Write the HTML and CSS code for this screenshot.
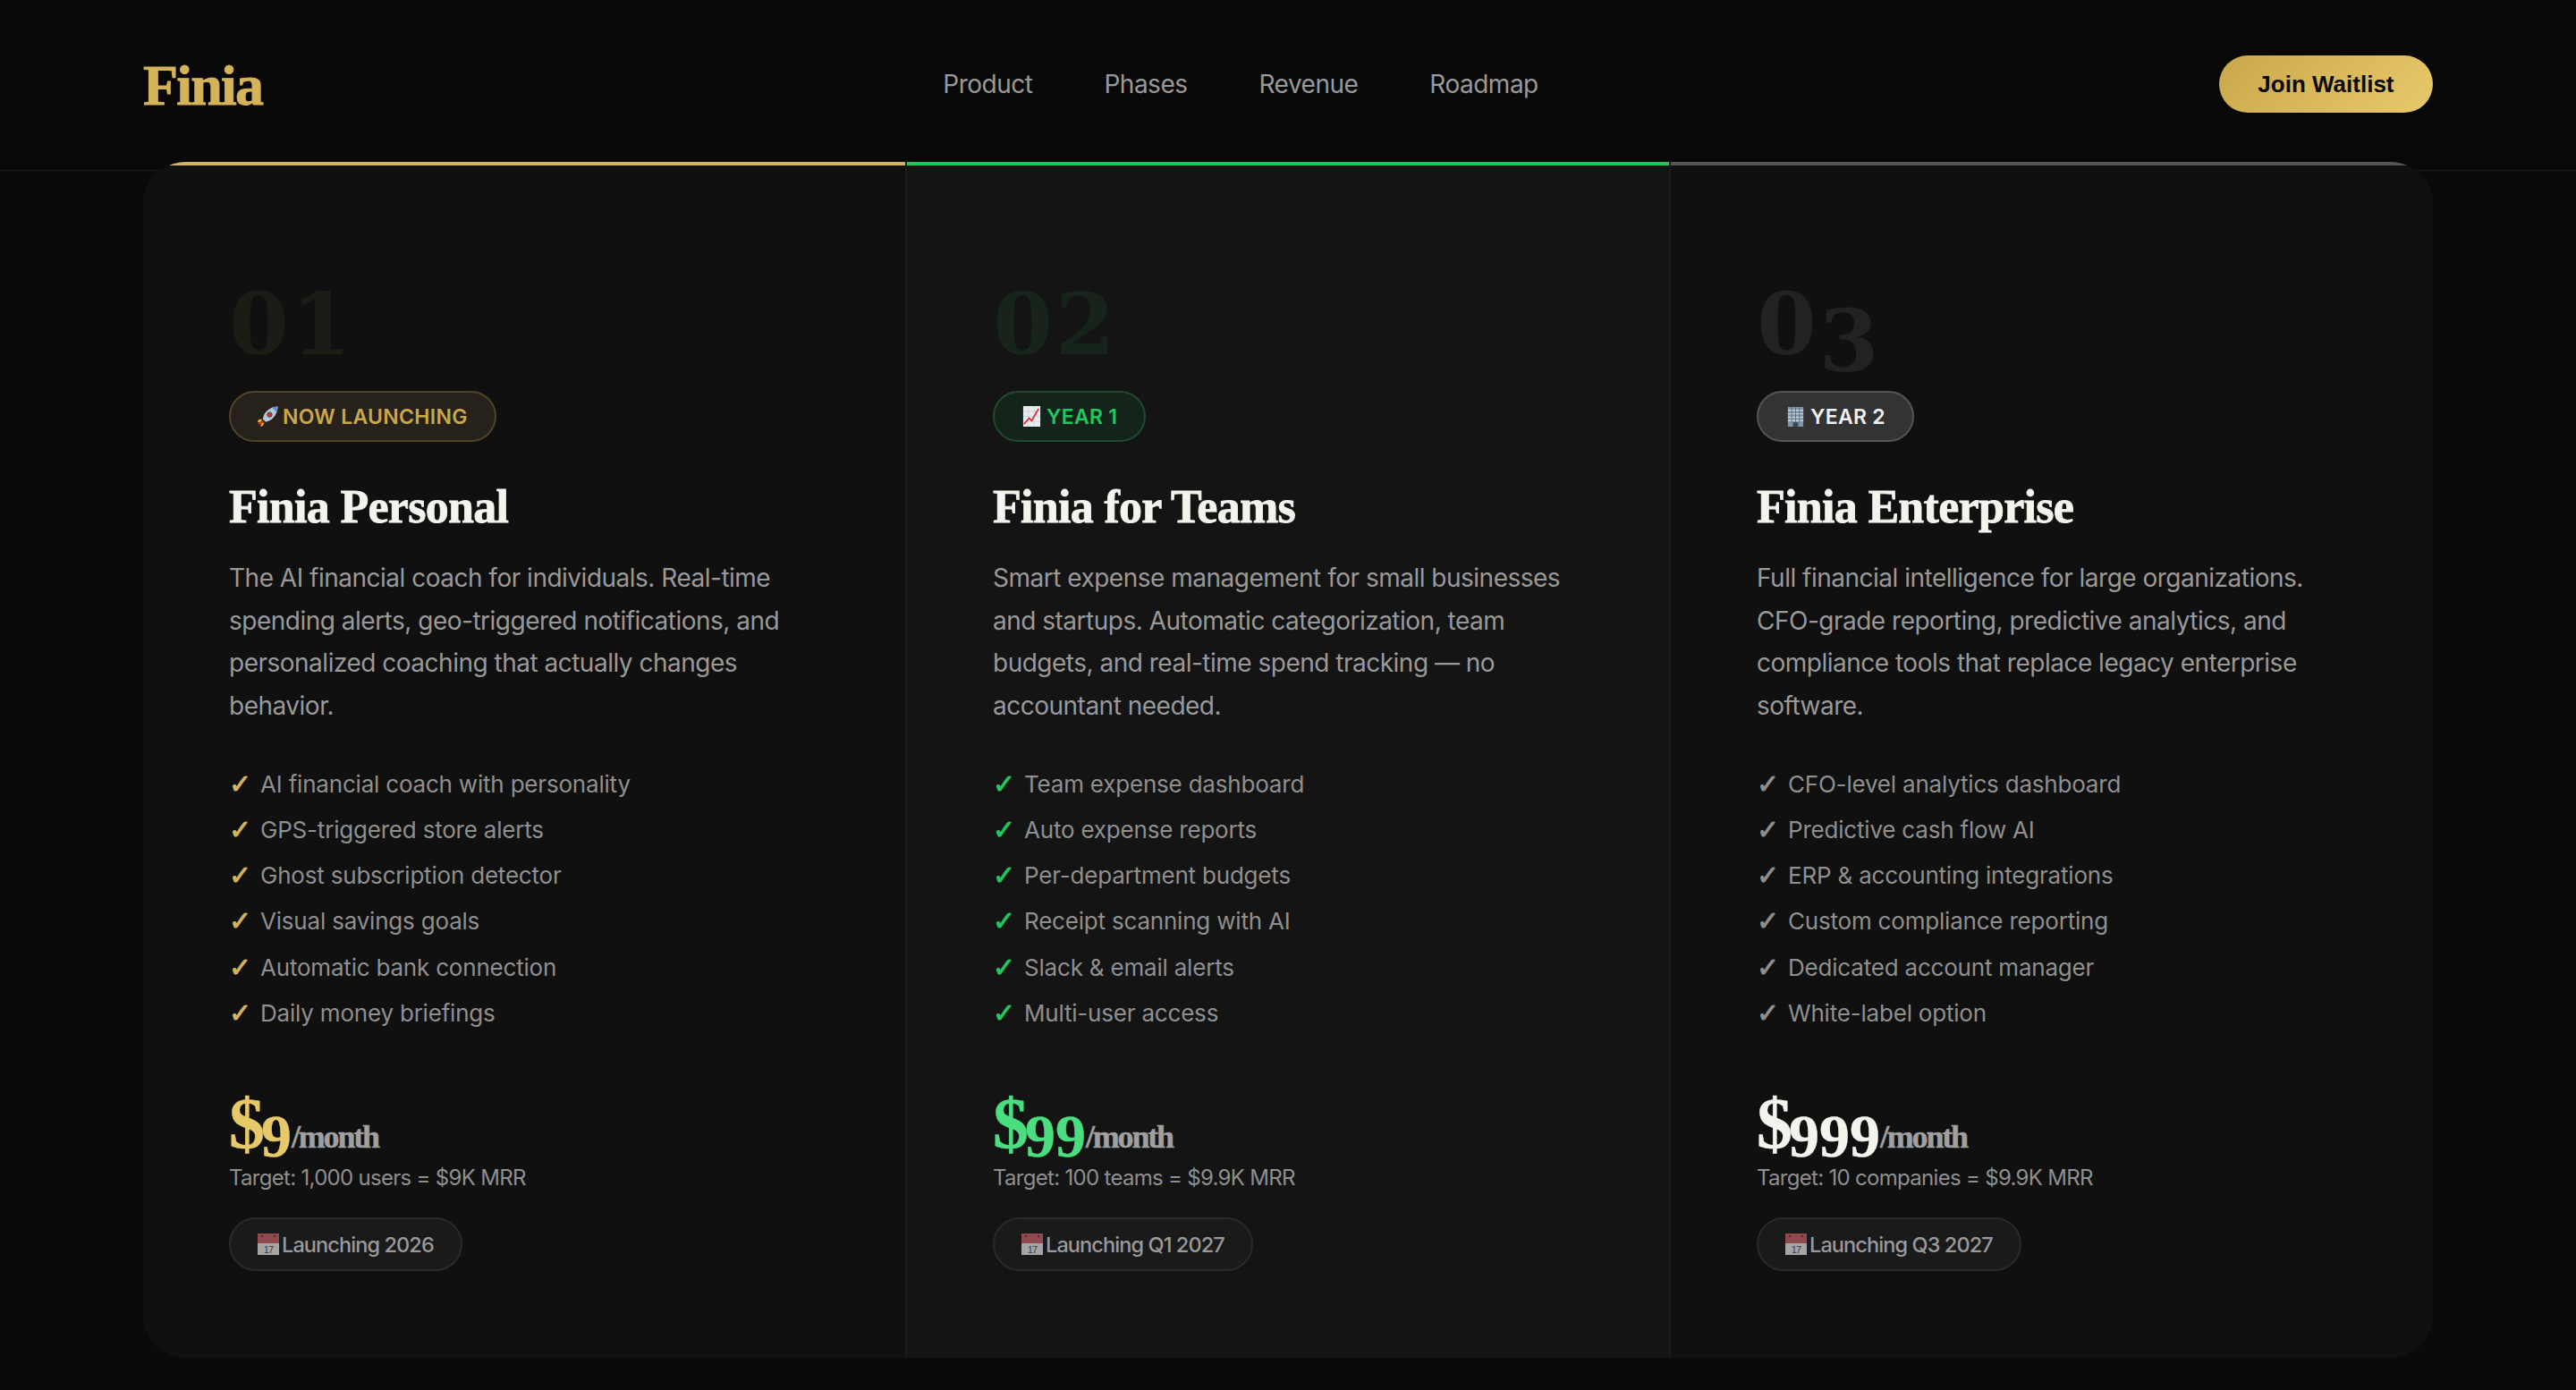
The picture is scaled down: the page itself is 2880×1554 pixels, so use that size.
FILE: index.html
```html
<!DOCTYPE html>
<html lang="en">
<head>
    <meta charset="UTF-8">
    <meta name="viewport" content="width=device-width, initial-scale=1.0">
    <title>Finia</title>
    <link rel="stylesheet" href="styles.css">
</head>
<body>
    <nav class="topnav">
        <div class="logo">Finia</div>
        <div class="nav-links">
            <a href="#product">Product</a>
            <a href="#phases">Phases</a>
            <a href="#revenue">Revenue</a>
            <a href="#roadmap">Roadmap</a>
        </div>
        <button class="waitlist-btn">Join Waitlist</button>
    </nav>

    <main class="phase-grid">
        <!-- Personal -->
        <section class="phase phase-gold">
            <div class="phase-num">01</div>
            <span class="phase-tag">
                <svg class="tag-icon" viewBox="0 0 24 24">
                    <path d="M7 17 L2 18 L1 22 L6 20 Z" fill="#e8352b"/>
                    <path d="M8 19 L6 23 L3 24 L5 20 Z" fill="#f7c325"/>
                    <path d="M5 15 L1 16 L0 19 L4 18 Z" fill="#f7c325"/>
                    <path d="M23.5 0.5 C17 0.5 11 4 7.5 10 L6 15 L9.5 18.5 L14 17 C20 13.5 23.5 7 23.5 0.5 Z" fill="#b9c6d4"/>
                    <path d="M23.5 0.5 C21 0.6 19 1 17 2 L22 7 C23 5 23.5 3 23.5 0.5 Z" fill="#5b93d6"/>
                    <circle cx="14" cy="10" r="2.8" fill="#c8342c" stroke="#33445a" stroke-width="1"/>
                </svg>
                NOW LAUNCHING
            </span>
            <h2 class="phase-title">Finia Personal</h2>
            <p class="phase-desc">The AI financial coach for individuals. Real-time spending alerts, geo-triggered notifications, and personalized coaching that actually changes behavior.</p>
            <ul class="feature-list">
                <li><span class="tick">✓</span>AI financial coach with personality</li>
                <li><span class="tick">✓</span>GPS-triggered store alerts</li>
                <li><span class="tick">✓</span>Ghost subscription detector</li>
                <li><span class="tick">✓</span>Visual savings goals</li>
                <li><span class="tick">✓</span>Automatic bank connection</li>
                <li><span class="tick">✓</span>Daily money briefings</li>
            </ul>
            <div class="price"><span class="cur">$</span><span class="amt">9</span><span class="per">/month</span></div>
            <div class="target">Target: 1,000 users = $9K MRR</div>
            <span class="launch">
                <svg class="launch-icon" viewBox="0 0 24 24">
                    <rect width="24" height="24" fill="#a5a5a5"/>
                    <rect width="24" height="11" fill="#8e4a4c"/>
                    <circle cx="5" cy="3" r="1" fill="#3a2a2a"/>
                    <circle cx="19" cy="3" r="1" fill="#3a2a2a"/>
                    <text x="12" y="21.5" font-size="11" text-anchor="middle" fill="#3b3b3b" font-family="Liberation Sans">17</text>
                </svg>
                Launching 2026
            </span>
        </section>

        <!-- Teams -->
        <section class="phase phase-green">
            <div class="phase-num">02</div>
            <span class="phase-tag">
                <svg class="tag-icon" viewBox="0 0 24 24">
                    <rect x="2" y="0" width="20" height="24" fill="#e9edf0"/>
                    <path d="M2 6 H22 M2 12 H22 M2 18 H22 M8 0 V24 M15 0 V24" stroke="#c6ccd2" stroke-width="0.7"/>
                    <path d="M3 21 L9 14 L12 17 L20 3" stroke="#d0342c" stroke-width="1.8" fill="none"/>
                </svg>
                YEAR 1
            </span>
            <h2 class="phase-title">Finia for Teams</h2>
            <p class="phase-desc">Smart expense management for small businesses and startups. Automatic categorization, team budgets, and real-time spend tracking — no accountant needed.</p>
            <ul class="feature-list">
                <li><span class="tick">✓</span>Team expense dashboard</li>
                <li><span class="tick">✓</span>Auto expense reports</li>
                <li><span class="tick">✓</span>Per-department budgets</li>
                <li><span class="tick">✓</span>Receipt scanning with AI</li>
                <li><span class="tick">✓</span>Slack &amp; email alerts</li>
                <li><span class="tick">✓</span>Multi-user access</li>
            </ul>
            <div class="price"><span class="cur">$</span><span class="amt">99</span><span class="per">/month</span></div>
            <div class="target">Target: 100 teams = $9.9K MRR</div>
            <span class="launch">
                <svg class="launch-icon" viewBox="0 0 24 24">
                    <rect width="24" height="24" fill="#a5a5a5"/>
                    <rect width="24" height="11" fill="#8e4a4c"/>
                    <circle cx="5" cy="3" r="1" fill="#3a2a2a"/>
                    <circle cx="19" cy="3" r="1" fill="#3a2a2a"/>
                    <text x="12" y="21.5" font-size="11" text-anchor="middle" fill="#3b3b3b" font-family="Liberation Sans">17</text>
                </svg>
                Launching Q1 2027
            </span>
        </section>

        <!-- Enterprise -->
        <section class="phase phase-grey">
            <div class="phase-num">0<span class="drop">3</span></div>
            <span class="phase-tag">
                <svg class="tag-icon" viewBox="0 0 24 24">
                    <rect x="3" y="1" width="18" height="23" fill="#7f96a8"/>
                    <path d="M3 5 H21 M3 9 H21 M3 13 H21 M3 17 H21" stroke="#c9d6df" stroke-width="1.4"/>
                    <path d="M7.5 1 V20 M12 1 V20 M16.5 1 V20" stroke="#5d7182" stroke-width="1"/>
                    <rect x="9" y="19" width="6" height="5" fill="#39454f"/>
                </svg>
                YEAR 2
            </span>
            <h2 class="phase-title">Finia Enterprise</h2>
            <p class="phase-desc">Full financial intelligence for large organizations. CFO-grade reporting, predictive analytics, and compliance tools that replace legacy enterprise software.</p>
            <ul class="feature-list">
                <li><span class="tick">✓</span>CFO-level analytics dashboard</li>
                <li><span class="tick">✓</span>Predictive cash flow AI</li>
                <li><span class="tick">✓</span>ERP &amp; accounting integrations</li>
                <li><span class="tick">✓</span>Custom compliance reporting</li>
                <li><span class="tick">✓</span>Dedicated account manager</li>
                <li><span class="tick">✓</span>White-label option</li>
            </ul>
            <div class="price"><span class="cur">$</span><span class="amt">999</span><span class="per">/month</span></div>
            <div class="target">Target: 10 companies = $9.9K MRR</div>
            <span class="launch">
                <svg class="launch-icon" viewBox="0 0 24 24">
                    <rect width="24" height="24" fill="#a5a5a5"/>
                    <rect width="24" height="11" fill="#8e4a4c"/>
                    <circle cx="5" cy="3" r="1" fill="#3a2a2a"/>
                    <circle cx="19" cy="3" r="1" fill="#3a2a2a"/>
                    <text x="12" y="21.5" font-size="11" text-anchor="middle" fill="#3b3b3b" font-family="Liberation Sans">17</text>
                </svg>
                Launching Q3 2027
            </span>
        </section>
    </main>
</body>
</html>
```

FILE: styles.css
```css
* {
    margin: 0;
    padding: 0;
    box-sizing: border-box;
}

html, body {
    height: 100%;
}

body {
    font-family: Inter, "Noto Sans", sans-serif;
    background: #0a0a0a;
    color: #f5f3ee;
    overflow: hidden;
}

/* top bar */
.topnav {
    display: flex;
    justify-content: space-between;
    align-items: center;
    height: 191px;
    padding: 0 160px 2px;
    background: #080808;
    border-bottom: 1px solid #1a1a1a;
}

.logo {
    font-family: "Liberation Serif", serif;
    font-size: 64px;
    font-weight: bold;
    letter-spacing: -1.8px;
    margin-top: 3px;
    color: #d4b35a;
    -webkit-text-stroke: 1px #d4b35a;
}

.nav-links {
    display: flex;
    gap: 80px;
}

.nav-links a {
    font-size: 28px;
    color: #999;
    text-decoration: none;
    letter-spacing: -0.5px;
}

.waitlist-btn {
    font-family: "Liberation Sans", sans-serif;
    font-size: 26px;
    font-weight: bold;
    color: #0a0a0a;
    height: 64px;
    padding: 0 43.5px;
    border: none;
    border-radius: 100px;
    background: linear-gradient(135deg, #c9a84c 0%, #e8c96a 100%);
}

/* three phases */
.phase-grid {
    display: grid;
    grid-template-columns: repeat(3, 1fr);
    gap: 2px;
    width: 2560px;
    margin: -10px auto 0;
    position: relative;
    background: #1a1a1a;
    border-radius: 48px;
    overflow: hidden;
}

.phase {
    display: flex;
    flex-direction: column;
    align-items: flex-start;
    height: 1337px;
    padding: 127px 96px 0;
    background: #101010;
    border-top: 4px solid #555;
}

.phase-gold { border-top-color: #d4b35a; }
.phase-green { border-top-color: #22c55e; background: #141414; }
.phase-grey { border-top-color: #555; }

.phase-num {
    font-family: "DejaVu Serif", serif;
    font-size: 96px;
    font-weight: bold;
    height: 102px;
    line-height: 102px;
    letter-spacing: 3px;
    margin-bottom: 23px;
}

.phase-gold .phase-num { color: #1c1b15; }
.phase-green .phase-num { color: #17241c; }
.phase-grey .phase-num { color: #222; }

.drop {
    vertical-align: -19px;
}

.phase-tag {
    display: inline-flex;
    align-items: center;
    gap: 5px;
    height: 57px;
    padding: 0 30px;
    font-size: 23px;
    font-weight: 600;
    letter-spacing: 0.3px;
    border-radius: 100px;
    border: 2px solid #4a4a4a;
    margin-bottom: 42px;
}

.phase-gold .phase-tag {
    color: #c9a84c;
    background: #26211a;
    border-color: #4f4426;
}

.phase-green .phase-tag {
    color: #22c55e;
    background: #14241a;
    border-color: #1f4a2d;
}

.phase-grey .phase-tag {
    color: #f0f0f0;
    background: #333;
    border-color: #555;
}

.tag-icon {
    width: 23px;
    height: 23px;
    flex-shrink: 0;
}

.phase-title {
    font-family: "Liberation Serif", serif;
    font-size: 52px;
    font-weight: bold;
    line-height: 62px;
    letter-spacing: -0.7px;
    color: #f5f3ee;
    -webkit-text-stroke: 0.8px #f5f3ee;
    margin-bottom: 25px;
}

.phase-desc {
    font-size: 28px;
    line-height: 47.6px;
    letter-spacing: -0.5px;
    color: #999;
    margin-bottom: 37px;
}

.feature-list {
    list-style: none;
    margin-bottom: 58px;
}

.feature-list li {
    display: flex;
    align-items: center;
    height: 51.3px;
    font-size: 26px;
    letter-spacing: -0.2px;
    color: #8f8f8f;
}

.tick {
    width: 35px;
    flex-shrink: 0;
    font-family: "DejaVu Sans", sans-serif;
    font-size: 30px;
    -webkit-text-stroke: 1px currentColor;
}

.phase-gold .tick { color: #d4b35a; }
.phase-green .tick { color: #22c55e; }
.phase-grey .tick { color: #8f8f8f; }

.price {
    font-family: "Liberation Serif", serif;
    font-weight: bold;
    font-size: 68px;
    height: 81px;
    line-height: 80px;
    white-space: nowrap;
    -webkit-text-stroke: 0.5px currentColor;
}

.cur {
    font-size: 80px;
    letter-spacing: -4px;
}

.amt {
    vertical-align: -10px;
    line-height: 1;
}

.phase-gold .price { color: #e8c96a; }
.phase-green .price { color: #4ade80; }
.phase-grey .price { color: #f5f3ee; }

.per {
    font-size: 36px;
    letter-spacing: -2.2px;
    color: #a0a0a0;
}

.target {
    font-size: 24px;
    line-height: 40px;
    letter-spacing: -0.7px;
    color: #8f8f8f;
    margin-bottom: 24px;
}

.launch {
    display: inline-flex;
    align-items: center;
    gap: 3px;
    height: 60px;
    padding: 0 30px;
    font-size: 23.5px;
    font-weight: 500;
    letter-spacing: -0.9px;
    color: #999;
    background: #1a1a1a;
    border: 2px solid #2a2a2a;
    border-radius: 100px;
}

.launch-icon {
    width: 24px;
    height: 24px;
    flex-shrink: 0;
}
```
